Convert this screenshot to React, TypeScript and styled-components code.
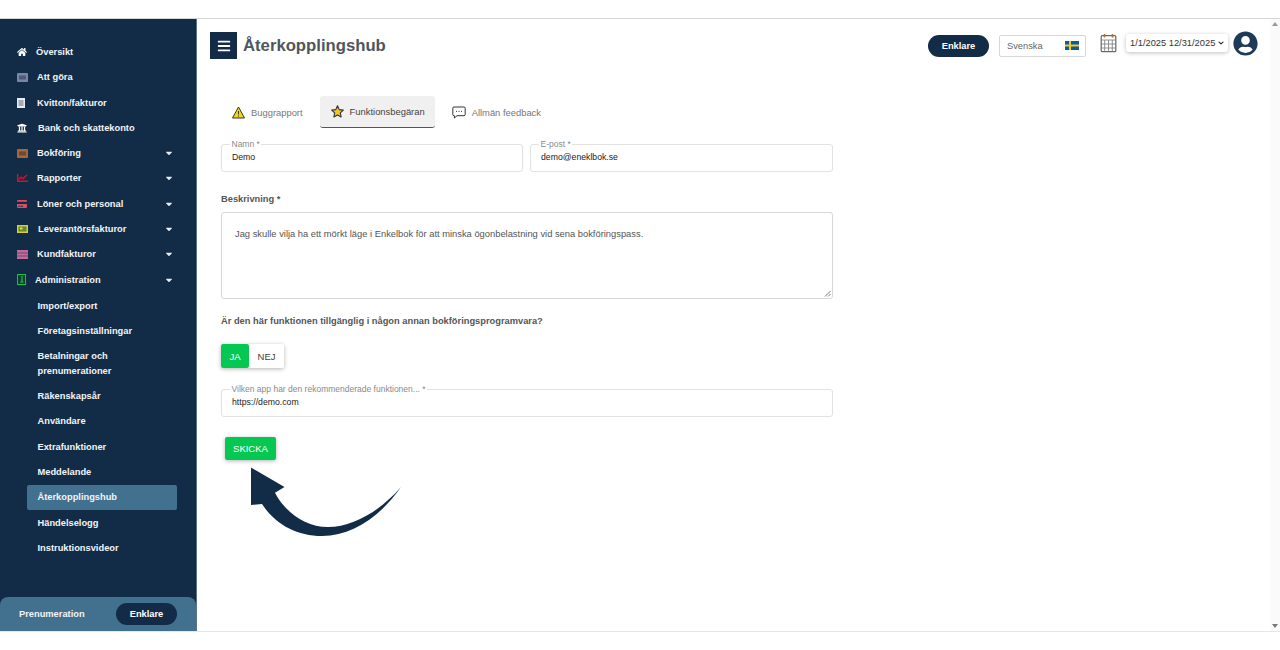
import React from "react";
import styled, { createGlobalStyle } from "styled-components";
import { FaHome, FaUniversity, FaCreditCard, FaCaretDown, FaChevronDown, FaBars, FaUserCircle } from "react-icons/fa";

const GlobalStyle = createGlobalStyle`
  html, body { margin: 0; padding: 0; background: #fff; overflow: hidden; }
  body { font-family: "Liberation Sans", Arial, sans-serif; }
  * { box-sizing: border-box; }
`;

const Page = styled.div`
  width: 1280px;
  height: 650px;
  padding: 18px 0 18px;
`;

const Frame = styled.div`
  display: flex;
  height: 614px;
  border-top: 1px solid #d6d6d6;
  border-bottom: 1px solid #e6e6e6;
`;

const Sidebar = styled.aside`
  width: 197px;
  flex: none;
  background: #122c47;
  border-right: 1px solid #5a7288;
  display: flex;
  flex-direction: column;
  padding-top: 20.3px;
`;

const Menu = styled.nav`
  flex: 1;
  padding-left: 17px;
`;

const MenuRow = styled.div`
  height: 25.3px;
  display: flex;
  align-items: center;
  color: #f2f4f7;
  font-size: 9.3px;
  font-weight: 700;
  padding-right: 22px;
`;

const MenuIcon = styled.span<{ $color: string; $gap?: number }>`
  width: 12px;
  height: 12px;
  flex: none;
  display: flex;
  align-items: center;
  justify-content: flex-start;
  color: ${(p) => p.$color};
  margin-right: ${(p) => p.$gap ?? 7}px;
  font-size: 10px;
`;

const MenuText = styled.span`
  flex: 1;
`;

const SubMenu = styled.div`
  margin: 1px 0 0 10px;
  width: 150px;
`;

const SubItem = styled.div<{ $active?: boolean }>`
  min-height: 25.3px;
  display: flex;
  align-items: center;
  padding: 5.35px 10px 5.35px 10.5px;
  border-radius: 2px;
  color: #f2f4f7;
  font-size: 9.3px;
  font-weight: 700;
  line-height: 14.6px;
  background: ${(p) => (p.$active ? "#42708f" : "transparent")};
`;

const PlanBar = styled.div`
  height: 34px;
  background: #42708f;
  border-radius: 8px 8px 0 0;
  display: flex;
  align-items: center;
  justify-content: space-between;
  padding: 0 19px 0 19px;
  color: #f2f4f7;
  font-size: 9.3px;
  font-weight: 700;
`;

const Pill = styled.span`
  display: inline-flex;
  align-items: center;
  justify-content: center;
  background: #122c47;
  color: #fff;
  border-radius: 11px;
  font-size: 9.3px;
  font-weight: 700;
  width: 61px;
  height: 22px;
`;

const Main = styled.main`
  flex: 1;
  display: flex;
  flex-direction: column;
  padding: 13px 0 0 13px;
  min-width: 0;
`;

const Header = styled.header`
  display: flex;
  align-items: center;
  height: 27px;
`;

const MenuButton = styled.div`
  width: 27px;
  height: 27px;
  background: #122c47;
  color: #fff;
  display: flex;
  align-items: center;
  justify-content: center;
  font-size: 14px;
`;

const Title = styled.h1`
  margin: 0 0 0 6px;
  flex: 1;
  font-size: 16.7px;
  font-weight: 700;
  color: #4d5760;
`;

const LangBox = styled.div`
  width: 87px;
  height: 22px;
  margin-left: 10px;
  border: 1px solid #d8d8d8;
  border-radius: 2px;
  display: flex;
  align-items: center;
  justify-content: space-between;
  padding: 0 6px 0 7px;
  font-size: 9.3px;
  color: #666;
`;

const CalendarWrap = styled.span`
  align-self: flex-start;
  margin: 1px 0 0 14px;
  width: 17px;
  height: 20px;
  display: flex;
`;

const DateSelect = styled.div`
  align-self: flex-start;
  margin: 2px 0 0 9px;
  width: 102px;
  height: 18px;
  border-radius: 3px;
  box-shadow: 0 1px 4px rgba(0, 0, 0, 0.25);
  display: flex;
  align-items: center;
  padding-left: 4px;
  gap: 3px;
  font-size: 9.3px;
  color: #333;
  white-space: nowrap;
`;

const Avatar = styled.span`
  align-self: flex-start;
  margin: -1px 12px 0 5px;
  width: 25px;
  height: 25px;
  font-size: 25px;
  color: #1d3a57;
  display: flex;
`;

const Content = styled.div`
  width: 612px;
  margin-left: 11px;
`;

const Tabs = styled.div`
  display: flex;
  margin-top: 37px;
  height: 32px;
`;

const Tab = styled.div<{ $active?: boolean; $left?: number; $right?: number }>`
  display: flex;
  align-items: center;
  gap: 6px;
  padding: 0 ${(p) => p.$right ?? 10}px 0 ${(p) => p.$left ?? 11}px;
  font-size: 9.4px;
  color: ${(p) => (p.$active ? "#444" : "#777")};
  background: ${(p) => (p.$active ? "#f0f0f0" : "transparent")};
  border-radius: 3px;
  border-bottom: ${(p) => (p.$active ? "1.5px solid #555" : "none")};
`;

const Row = styled.div`
  display: flex;
  gap: 7px;
  margin-top: 11px;
`;

const Field = styled.fieldset<{ $width?: number; $top?: number }>`
  margin: ${(p) => p.$top ?? 0}px 0 0;
  padding: 0 10px;
  height: 33px;
  width: ${(p) => (p.$width ? `${p.$width}px` : "100%")};
  border: 1px solid #e2e2e2;
  border-radius: 3px;
  font-size: 8.5px;

  legend {
    padding: 0 1.5px;
    margin-left: -2px;
    font-size: 8.5px;
    color: #8a8a8a;
    line-height: 10px;
  }
`;

const FieldValue = styled.div`
  font-size: 8.7px;
  line-height: 12px;
  color: #222;
  margin-top: 2px;
`;

const FieldLabel = styled.div<{ $top: number }>`
  margin-top: ${(p) => p.$top}px;
  font-size: 9.3px;
  font-weight: 700;
  color: #555;
  line-height: 12px;
`;

const DescriptionBox = styled.div`
  position: relative;
  height: 87px;
  margin-top: 7px;
  border: 1px solid #d8d8d8;
  border-radius: 3px;
  padding: 15px 13px;
  font-size: 9.35px;
  color: #555;
  line-height: 12px;
`;

const ResizeGrip = styled.svg`
  position: absolute;
  right: 1px;
  bottom: 1px;
`;

const Toggle = styled.div`
  display: inline-flex;
  height: 24px;
  margin-top: 17px;
  border-radius: 2px;
  box-shadow: 0 1px 4px rgba(0, 0, 0, 0.3);
`;

const ToggleOption = styled.div<{ $active?: boolean }>`
  width: ${(p) => (p.$active ? 28 : 35)}px;
  display: flex;
  align-items: center;
  justify-content: center;
  font-size: 9.5px;
  background: ${(p) => (p.$active ? "#05c853" : "#fff")};
  color: ${(p) => (p.$active ? "#fff" : "#444")};
  border-radius: 2px;
`;

const SubmitButton = styled.div`
  width: 51px;
  height: 23px;
  margin: 20px 0 0 4px;
  padding-bottom: 1px;
  background: #05c853;
  color: #fff;
  border-radius: 2px;
  display: flex;
  align-items: center;
  justify-content: center;
  font-size: 9.5px;
  box-shadow: 0 1px 4px rgba(0, 0, 0, 0.3);
`;

const Arrow = styled.svg`
  display: block;
  margin: 6px 0 0 29px;
`;

const Scrollbar = styled.div`
  width: 10px;
  flex: none;
  background: #fafafa;
  display: flex;
  flex-direction: column;
  align-items: center;
  justify-content: space-between;
  padding: 3px 0;
`;

const ScrollArrow = styled.span<{ $down?: boolean }>`
  width: 0;
  height: 0;
  border-left: 3.5px solid transparent;
  border-right: 3.5px solid transparent;
  ${(p) => (p.$down ? "border-top: 4px solid #777;" : "border-bottom: 4px solid #999;")}
`;

const BoxIcon = ({ fill, line }: { fill: string; line: string }) => (
  <svg width="11" height="9" viewBox="0 0 11 9">
    <rect width="11" height="9" rx="1" fill={fill} />
    <rect x="2" y="2.5" width="7" height="4" fill={line} />
  </svg>
);

const DocIcon = () => (
  <svg width="8" height="10" viewBox="0 0 8 10">
    <rect width="8" height="10" fill="#e8ecf2" />
    <path d="M1.5 3h5M1.5 5h5M1.5 7h5" stroke="#5a6b80" />
  </svg>
);

const StackIcon = () => (
  <svg width="11" height="9" viewBox="0 0 11 9">
    <rect width="11" height="9" fill="#c06a98" />
    <path d="M0 3h11M0 6h11" stroke="#6f4a78" />
  </svg>
);

const LedgerIcon = () => (
  <svg width="11" height="8" viewBox="0 0 11 8">
    <rect width="11" height="8" fill="#d8cf2c" />
    <rect x="1.5" y="1.5" width="8" height="5" fill="#5f8a3a" />
    <rect x="3" y="2.5" width="2.5" height="2" fill="#e8df50" />
  </svg>
);

const AdminIcon = () => (
  <svg width="9" height="11" viewBox="0 0 9 11">
    <rect x=".5" y=".5" width="8" height="10" fill="#0c3f2c" stroke="#16c24c" />
    <path d="M5 2v6M3 8h3.5" stroke="#16c24c" strokeWidth="1.2" />
  </svg>
);

const ChartIcon = () => (
  <svg width="11" height="8" viewBox="0 0 11 8">
    <path d="M.7 0v7.3H11" stroke="#d3122a" strokeWidth="1.4" fill="none" />
    <path d="M1.5 5.5 4 3.2l2 1.6L10 1" stroke="#d3122a" strokeWidth="1.5" fill="none" />
  </svg>
);

const WarningIcon = () => (
  <svg width="13" height="13" viewBox="0 0 13 13">
    <path d="M6.5 1 12.5 12H.5Z" fill="#f5d90a" stroke="#333" strokeWidth="1" strokeLinejoin="round" />
    <path d="M6.5 5v3.5M6.5 9.6v1" stroke="#333" />
  </svg>
);

const StarIcon = () => (
  <svg width="13" height="13" viewBox="0 0 24 24">
    <path d="M12 1.5l3.2 7 7.6.9-5.6 5.2 1.5 7.5L12 18.3l-6.7 3.8 1.5-7.5L1.2 9.4l7.6-.9z" fill="#f7c325" stroke="#333" strokeWidth="2" strokeLinejoin="round" />
  </svg>
);

const ChatIcon = () => (
  <svg width="14" height="13" viewBox="0 0 14 13">
    <path d="M2 1h10a1.2 1.2 0 0 1 1.2 1.2v6.3A1.2 1.2 0 0 1 12 9.7H5L2.4 12V9.7H2A1.2 1.2 0 0 1 .8 8.5V2.2A1.2 1.2 0 0 1 2 1Z" fill="#fff" stroke="#333" />
    <path d="M4 5.4h1M6.5 5.4h1M9 5.4h1" stroke="#333" />
  </svg>
);

const FlagIcon = () => (
  <svg width="14" height="9" viewBox="0 0 14 9">
    <rect width="14" height="9" fill="#0b5c9e" />
    <path d="M0 4.5h14M5 0v9" stroke="#fcc916" strokeWidth="2" />
  </svg>
);

const CalendarIcon = () => (
  <svg width="17" height="20" viewBox="0 0 17 20">
    <rect x="1.2" y="2.7" width="14.6" height="16" rx="1" fill="#fff" stroke="#666" strokeWidth="1.2" />
    <path d="M1 7h15M1 11h15M1 15h15M4.7 7v12M8.5 7v12M12.3 7v12" stroke="#777" strokeWidth=".8" />
    <path d="M4.5 1v3.5M12.5 1v3.5" stroke="#a8763e" strokeWidth="1.6" />
  </svg>
);

const items = [
  { label: "Översikt", icon: <FaHome />, color: "#fff", gap: 7 },
  { label: "Att göra", icon: <BoxIcon fill="#7b86a6" line="#4f5a78" />, color: "#fff", gap: 8 },
  { label: "Kvitton/fakturor", icon: <DocIcon />, color: "#fff", gap: 8 },
  { label: "Bank och skattekonto", icon: <FaUniversity />, color: "#fff", gap: 9 },
  { label: "Bokföring", icon: <BoxIcon fill="#a5683a" line="#6e4a34" />, color: "#fff", caret: true, gap: 8 },
  { label: "Rapporter", icon: <ChartIcon />, color: "#d3122a", caret: true, gap: 8 },
  { label: "Löner och personal", icon: <FaCreditCard />, color: "#d9505e", caret: true, gap: 8 },
  { label: "Leverantörsfakturor", icon: <LedgerIcon />, color: "#fff", caret: true, gap: 9 },
  { label: "Kundfakturor", icon: <StackIcon />, color: "#fff", caret: true, gap: 8 },
  { label: "Administration", icon: <AdminIcon />, color: "#fff", caret: true, gap: 6 },
];

const subItems = [
  "Import/export",
  "Företagsinställningar",
  "Betalningar och prenumerationer",
  "Räkenskapsår",
  "Användare",
  "Extrafunktioner",
  "Meddelande",
  "Återkopplingshub",
  "Händelselogg",
  "Instruktionsvideor",
];

export default function App() {
  return (
    <Page>
      <GlobalStyle />
      <Frame>
        <Sidebar>
          <Menu>
            {items.map((item) => (
              <MenuRow key={item.label}>
                <MenuIcon $color={item.color} $gap={item.gap}>
                  {item.icon}
                </MenuIcon>
                <MenuText>{item.label}</MenuText>
                {item.caret && <FaCaretDown size={10} color="#e8ecf2" />}
              </MenuRow>
            ))}
            <SubMenu>
              {subItems.map((label) => (
                <SubItem key={label} $active={label === "Återkopplingshub"}>
                  {label}
                </SubItem>
              ))}
            </SubMenu>
          </Menu>
          <PlanBar>
            Prenumeration
            <Pill>Enklare</Pill>
          </PlanBar>
        </Sidebar>
        <Main>
          <Header>
            <MenuButton>
              <FaBars />
            </MenuButton>
            <Title>Återkopplingshub</Title>
            <Pill>Enklare</Pill>
            <LangBox>
              Svenska
              <FlagIcon />
            </LangBox>
            <CalendarWrap>
              <CalendarIcon />
            </CalendarWrap>
            <DateSelect>
              1/1/2025 12/31/2025
              <FaChevronDown size={6} color="#222" />
            </DateSelect>
            <Avatar>
              <FaUserCircle />
            </Avatar>
          </Header>
          <Content>
            <Tabs>
              <Tab $right={17}>
                <WarningIcon />
                Buggrapport
              </Tab>
              <Tab $active>
                <StarIcon />
                Funktionsbegäran
              </Tab>
              <Tab $left={17}>
                <ChatIcon />
                Allmän feedback
              </Tab>
            </Tabs>
            <Row>
              <Field $width={302}>
                <legend>Namn *</legend>
                <FieldValue>Demo</FieldValue>
              </Field>
              <Field $width={303}>
                <legend>E-post *</legend>
                <FieldValue>demo@eneklbok.se</FieldValue>
              </Field>
            </Row>
            <FieldLabel $top={21}>Beskrivning *</FieldLabel>
            <DescriptionBox>
              Jag skulle vilja ha ett mörkt läge i Enkelbok för att minska ögonbelastning vid sena bokföringspass.
              <ResizeGrip width="7" height="7" viewBox="0 0 7 7">
                <path d="M6.5 1 1 6.5M6.5 4 4 6.5" stroke="#777" />
              </ResizeGrip>
            </DescriptionBox>
            <FieldLabel $top={16}>Är den här funktionen tillgänglig i någon annan bokföringsprogramvara?</FieldLabel>
            <Toggle>
              <ToggleOption $active>JA</ToggleOption>
              <ToggleOption>NEJ</ToggleOption>
            </Toggle>
            <Field $top={16}>
              <legend>Vilken app har den rekommenderade funktionen... *</legend>
              <FieldValue>https://demo.com</FieldValue>
            </Field>
            <SubmitButton>SKICKA</SubmitButton>
            <Arrow width="152" height="72" viewBox="250 466 152 72">
              <path
                d="M251 467.5 284.5 487 275 492.7C285 512 305 527 328 527 354 527 381 510 401 487 380 517 352 536 322 536 296 536 275 524 262 504L251 505Z"
                fill="#122c47"
              />
            </Arrow>
          </Content>
        </Main>
        <Scrollbar>
          <ScrollArrow />
          <ScrollArrow $down />
        </Scrollbar>
      </Frame>
    </Page>
  );
}
